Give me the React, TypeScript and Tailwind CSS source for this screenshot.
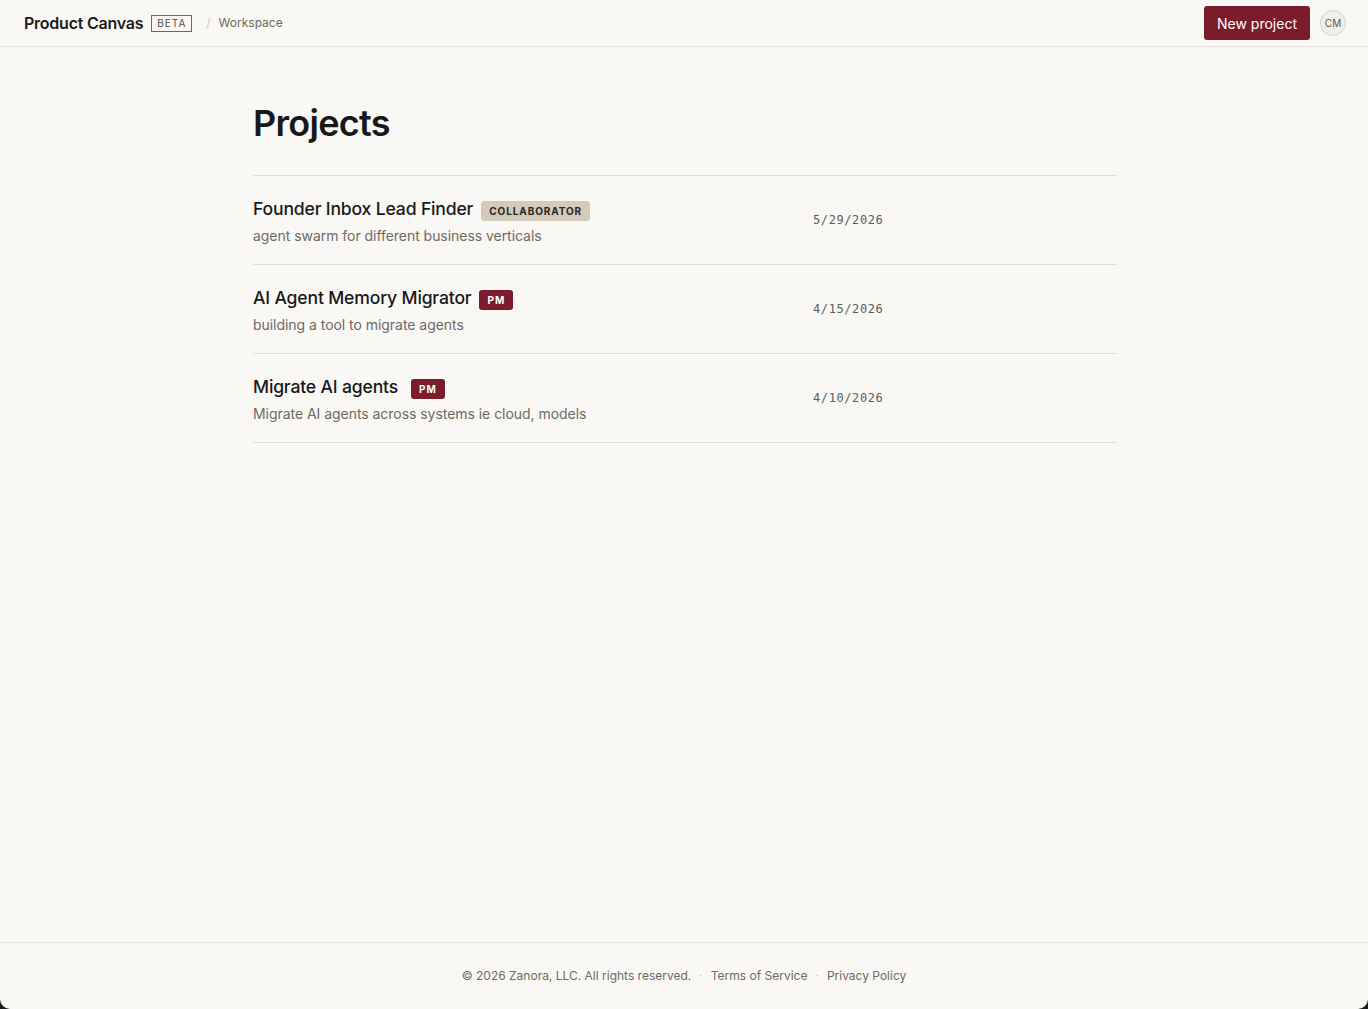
import React from 'react';

type Project = {
  name: string;
  role: 'COLLABORATOR' | 'PM';
  description: string;
  date: string;
  extraGap?: boolean;
};

const projects: Project[] = [
  { name: 'Founder Inbox Lead Finder', role: 'COLLABORATOR', description: 'agent swarm for different business verticals', date: '5/29/2026' },
  { name: 'AI Agent Memory Migrator', role: 'PM', description: 'building a tool to migrate agents', date: '4/15/2026' },
  { name: 'Migrate AI agents', role: 'PM', description: 'Migrate AI agents across systems ie cloud, models', date: '4/10/2026', extraGap: true },
];

const RoleBadge: React.FC<{ role: Project['role'] }> = ({ role }) =>
  role === 'PM' ? (
    <span className="inline-flex items-center h-5 px-2 rounded-[3px] bg-[#7a1c2a] text-white text-[10px] font-bold tracking-[0.1em]">PM</span>
  ) : (
    <span className="inline-flex items-center h-5 px-2 rounded-[3px] bg-[#d3cabb] text-[#2a2620] text-[10px] font-bold tracking-[0.09em]">COLLABORATOR</span>
  );

export default function App() {
  return (
    <div className="bg-[#1c1c1c]">
      <div
        className="min-h-[1009px] flex flex-col bg-[#f9f8f4] text-[#1b1b1b] rounded-b-[10px] overflow-hidden"
        style={{ fontFamily: 'Inter, "Noto Sans", sans-serif' }}
      >
        {/* Top bar */}
        <header className="h-[47px] border-b border-[#e4e1d9] px-6 flex items-center justify-between">
          <div className="flex items-center">
            <span className="text-[16px] font-semibold tracking-[-0.015em]">Product Canvas</span>
            <span className="ml-2 h-[17px] px-[5px] border border-[#6b6862] text-[#55524d] text-[10px] tracking-[0.1em] leading-none flex items-center">BETA</span>
            <span className="ml-[14px] text-[12px] text-[#c9c5bd]">/</span>
            <span className="ml-[8px] text-[12px] text-[#6b6862]">Workspace</span>
          </div>
          <div className="flex items-center gap-[10px] -mr-[2px]">
            <button className="h-[34px] px-[13px] rounded-[3px] bg-[#7a1c2a] text-white text-[14px]">New project</button>
            <div className="w-[26px] h-[26px] rounded-full border border-[#d6d1c5] bg-[#f1efe9] text-[#5a5750] text-[10px] flex items-center justify-center">CM</div>
          </div>
        </header>

        {/* Main */}
        <main className="flex-1">
          <div className="w-[864px] ml-[253px] pt-[54px]">
            <h1 className="text-[36px] font-semibold tracking-[-0.02em] leading-[44px] text-[#18181a]">Projects</h1>
            <div className="mt-[30px] border-t border-[#e0ddd4]">
              {projects.map((p) => (
                <div key={p.name} className="h-[89px] border-b border-[#e0ddd4] grid grid-cols-[560px_1fr] items-center">
                  <div className="pt-[2px]">
                    <div className="flex items-center">
                      <span className="text-[17.6px] font-medium tracking-[-0.01em] text-[#18181a]">{p.name}</span>
                      <span className={p.extraGap ? 'ml-[13px]' : 'ml-2'}>
                        <RoleBadge role={p.role} />
                      </span>
                    </div>
                    <div className="mt-[3px] text-[14px] tracking-[-0.003em] text-[#6d6a64]">{p.description}</div>
                  </div>
                  <div className="text-[12px] tracking-[0.05em] text-[#5f5c57]" style={{ fontFamily: '"DejaVu Sans Mono", monospace' }}>
                    {p.date}
                  </div>
                </div>
              ))}
            </div>
          </div>
        </main>

        {/* Footer */}
        <footer className="h-[67px] border-t border-[#e4e1d9] flex items-center justify-center text-[12px] text-[#6d6a64]">
          <span>© 2026 Zanora, LLC. All rights reserved.</span>
          <span className="mx-[8px] text-[#c9c5bd]">·</span>
          <span>Terms of Service</span>
          <span className="mx-[8px] text-[#c9c5bd]">·</span>
          <span>Privacy Policy</span>
        </footer>
      </div>
    </div>
  );
}
